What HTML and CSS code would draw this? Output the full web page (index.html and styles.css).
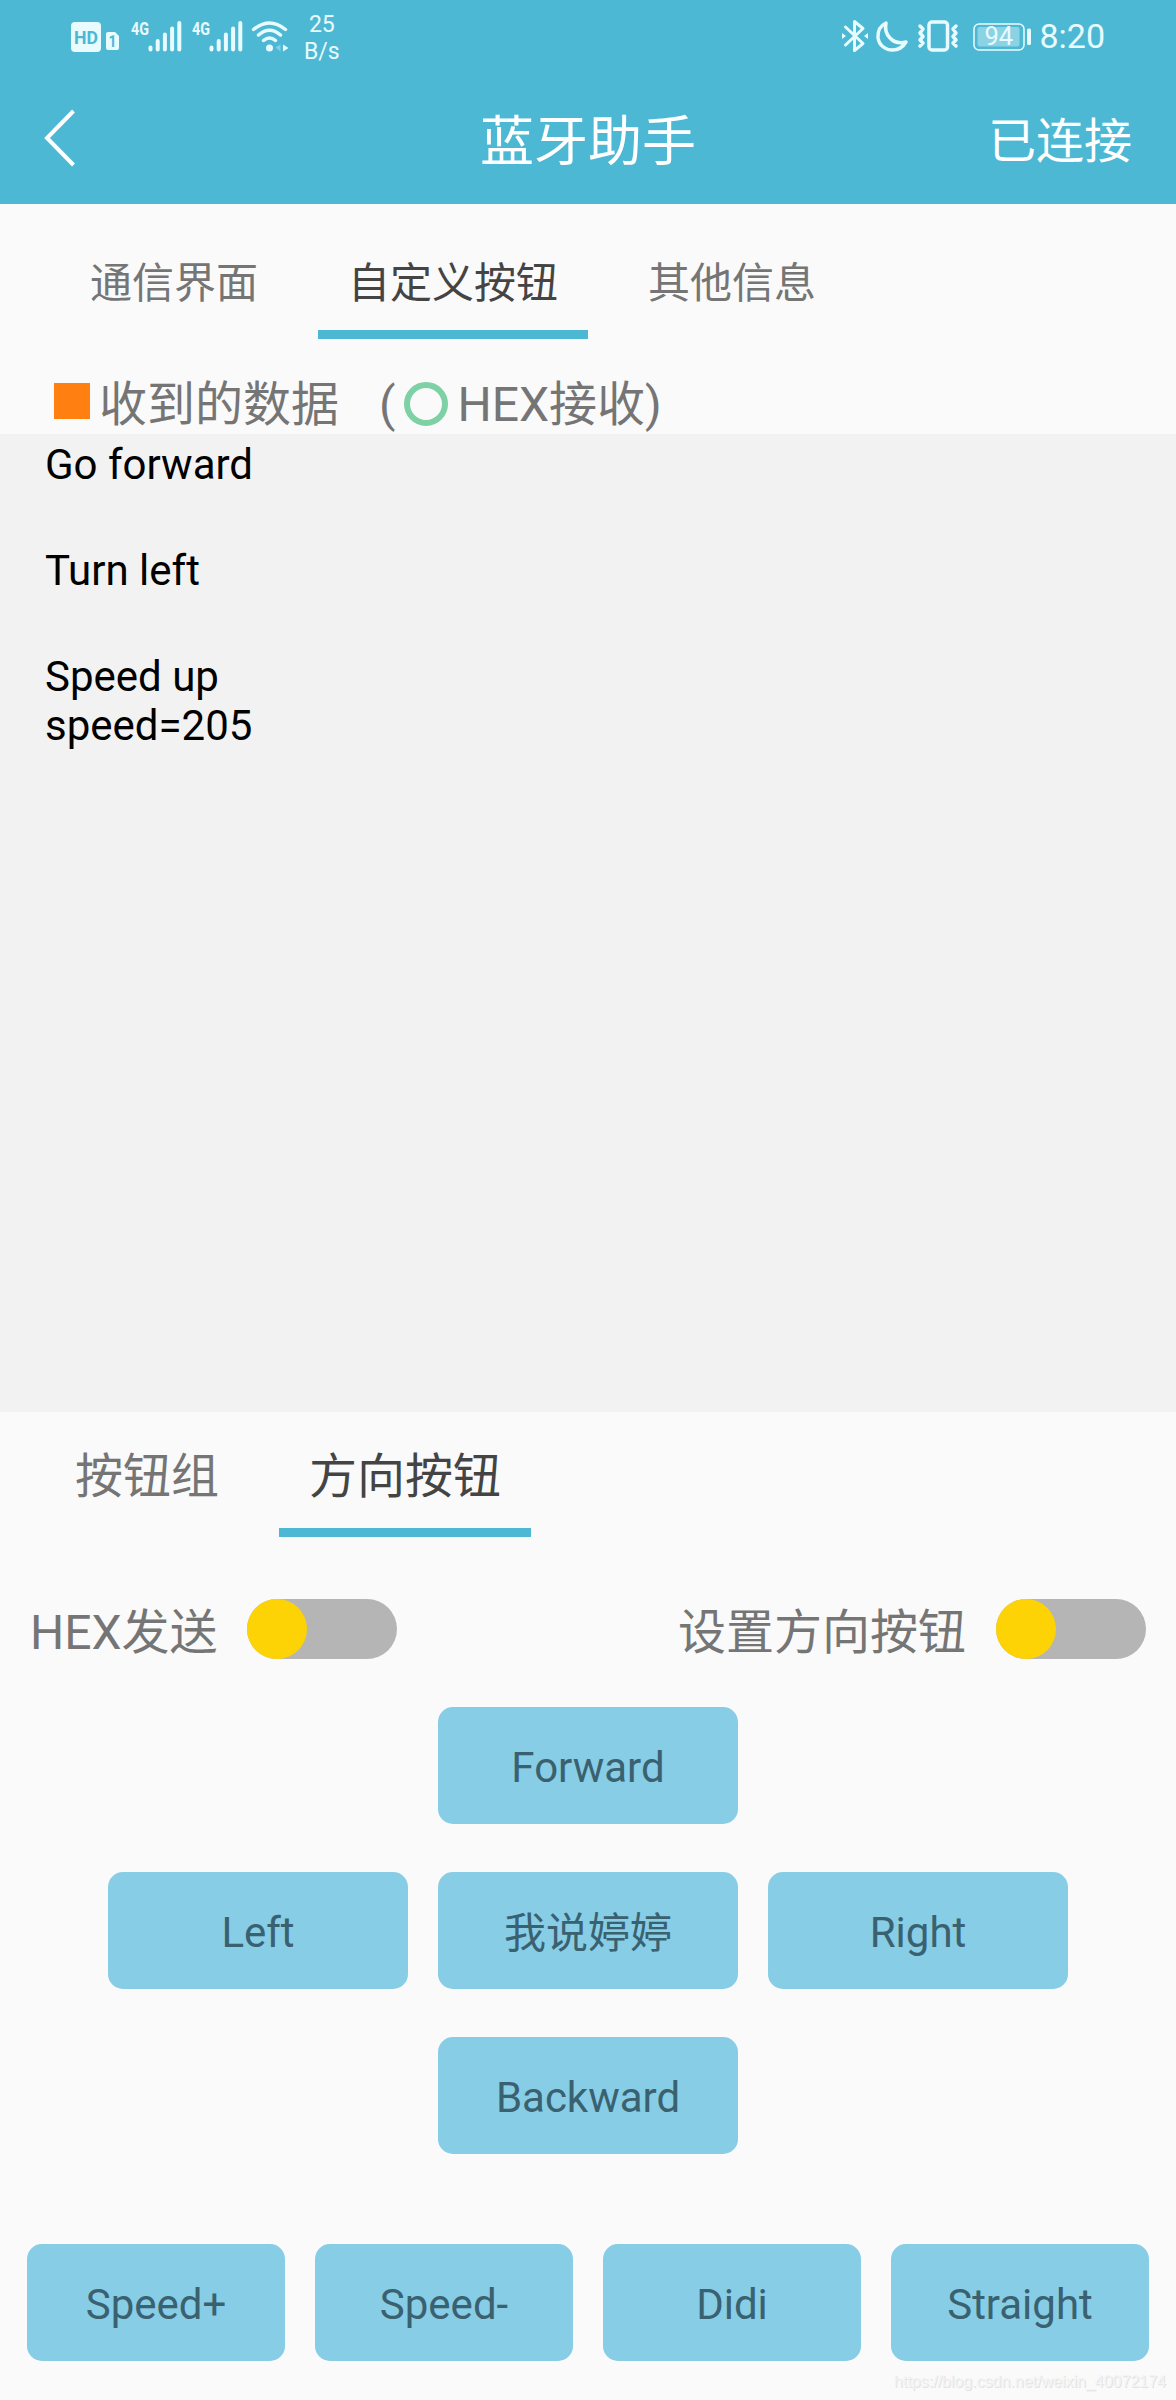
FILE: index.html
```html
<!DOCTYPE html>
<html lang="zh-CN">
<head>
<meta charset="UTF-8" />
<meta name="viewport" content="width=device-width, initial-scale=1" />
<title>蓝牙助手</title>
<link rel="stylesheet" href="styles.css">
</head>
<body>
  <header class="header">
    <div class="status-bar">
      <div class="status-left">
        <svg class="hd" width="48" height="32" viewBox="0 0 48 32">
          <rect x="0" y="2" width="30" height="30" rx="4"/>
          <text class="knock" x="3" y="24" font-size="19" textLength="24" lengthAdjust="spacingAndGlyphs">HD</text>
          <path d="M37 12h7l4 4v12a2 2 0 0 1-2 2h-9a2 2 0 0 1-2-2v-14a2 2 0 0 1 2-2z"/>
          <text class="knock" x="37.500" y="27" font-size="16" textLength="8" lengthAdjust="spacingAndGlyphs">1</text>
        </svg>
        <svg class="signal" width="51" height="32" viewBox="0 0 51 32">
          <text x="0" y="15" font-size="19" textLength="18" lengthAdjust="spacingAndGlyphs">4G</text>
          <path class="bars" d="M19.500 27.500v2M26.700 21v8.500M33.900 14.500v15M41.100 8.500v21M48.300 3v26.500"/>
        </svg>
        <svg class="signal" width="51" height="32" viewBox="0 0 51 32">
          <text x="0" y="15" font-size="19" textLength="18" lengthAdjust="spacingAndGlyphs">4G</text>
          <path class="bars" d="M19.500 27.500v2M26.700 21v8.500M33.900 14.500v15M41.100 8.500v21M48.300 3v26.500"/>
        </svg>
        <svg class="wifi" width="38" height="32" viewBox="0 0 38 32">
          <path class="line" d="M2.500 9.500Q18.500-3.500 34.500 9.500M7.500 15Q18.500 5.500 29.500 15M12.500 20.500Q18.500 15.500 24.500 20.500"/>
          <circle cx="18.500" cy="28" r="3.500"/>
          <path d="M32 24.500l5.500 3.500-5.500 3.500z"/>
          <path opacity=".35" d="M29.500 24.500v7l-5-4z"/>
        </svg>
        <div class="speed"><span>25</span><span>B/s</span></div>
      </div>
      <div class="status-right">
        <svg class="bluetooth" width="26" height="32" viewBox="0 0 26 32">
          <path class="line thin" d="M3.500 7l17.500 16.500-8.500 7v-29l8.500 7L3.500 25"/>
          <path d="M0 13l4 3-4 3zM26 13l-4 3 4 3z"/>
        </svg>
        <svg class="moon" width="32" height="32" viewBox="0 0 32 32">
          <path class="line" d="M10 3C4 6 1.500 11 2 17.500c1 8 7.500 12.500 14.500 12.500 6 0 10.500-3 13.500-8-6 1.500-12 .5-16-4C9.500 13.500 9 8 10 3z"/>
        </svg>
        <svg class="vibrate" width="40" height="32" viewBox="0 0 40 32">
          <rect class="line" x="11" y="2" width="18.500" height="28" rx="3"/>
          <path class="line" d="M2 6l3 3-3 4 3 3.500-3 3.500 3 3-3 3M38 6l-3 3 3 4-3 3.500 3 3.500-3 3 3 3"/>
        </svg>
        <svg class="battery" width="58" height="32" viewBox="0 0 58 32">
          <rect class="shell" x="1" y="4" width="50" height="26" rx="5"/>
          <rect x="4.500" y="7" width="42" height="19.500" rx="2" opacity=".4"/>
          <rect x="54" y="8.500" width="4" height="16.500" rx="1.500"/>
          <text class="level" x="11.500" y="25" font-size="25.500">94</text>
        </svg>
        <span class="clock">8:20</span>
      </div>
    </div>
    <div class="title-bar">
      <svg class="back" width="32" height="60" viewBox="0 0 32 60"><path d="M29.500 3L3 30l26.500 27"/></svg>
      <h1>蓝牙助手</h1>
      <span class="state">已连接</span>
    </div>
  </header>

  <nav class="tabs">
    <span class="tab">通信界面</span>
    <span class="tab active">自定义按钮</span>
    <span class="tab">其他信息</span>
  </nav>

  <div class="receive-title">
    <i class="square"></i>
    <span class="received">收到的数据</span>
    <span>(</span>
    <i class="ring"></i>
    <span>HEX接收)</span>
  </div>

  <div class="log">
    <p>Go forward</p>
    <p>Turn left</p>
    <p>Speed up<br>speed=205</p>
  </div>

  <nav class="tabs tabs-lower">
    <span class="tab">按钮组</span>
    <span class="tab active">方向按钮</span>
  </nav>

  <div class="switches">
    <label><span>HEX发送</span><i class="switch"></i></label>
    <label><span>设置方向按钮</span><i class="switch"></i></label>
  </div>

  <div class="direction">
    <button class="btn forward">Forward</button>
    <button class="btn left">Left</button>
    <button class="btn middle">我说婷婷</button>
    <button class="btn">Right</button>
    <button class="btn backward">Backward</button>
  </div>

  <div class="extra">
    <button class="btn">Speed+</button>
    <button class="btn">Speed-</button>
    <button class="btn">Didi</button>
    <button class="btn">Straight</button>
  </div>

  <div class="watermark">https://blog.csdn.net/weixin_40072174</div>
</body>
</html>
```
FILE: styles.css
```css
* {
  box-sizing: border-box;
}

body {
  margin: 0;
  width: 1176px;
  height: 2400px;
  position: relative;
  overflow: hidden;
  background: #fafafa;
  color: #757575;
  font-family: Roboto, "Noto Sans CJK SC", sans-serif;
  font-size: 48px;
}

.header {
  height: 204px;
  background: #4db8d4;
  color: #fff;
}

/* status bar */
.status-bar {
  display: flex;
  justify-content: space-between;
  height: 72px;
  padding: 0 71px;
  color: #e8fbff;
}

.status-left,
.status-right {
  display: flex;
  align-items: center;
}

.status-bar svg {
  display: block;
  fill: #e8fbff;
  overflow: visible;
}

.status-bar text {
  font-weight: 700;
}

.status-bar .knock {
  fill: #4db8d4;
}

.status-bar .bars,
.status-bar .line {
  fill: none;
  stroke: #e8fbff;
  stroke-width: 4;
  stroke-linecap: round;
  stroke-linejoin: round;
}

.status-bar .line {
  stroke-width: 3.5;
}

.status-bar .thin {
  stroke-width: 3;
}

.status-bar .shell {
  fill: none;
  stroke: #e8fbff;
  stroke-width: 1.5;
}

.status-bar .level {
  font-weight: 400;
}

.hd {
  margin-right: 2px;
}

.signal {
  margin-left: 10px;
}

.wifi {
  margin-left: 8px;
}

.speed {
  display: flex;
  flex-direction: column;
  align-items: center;
  margin: 3px 0 0 15px;
  font-size: 23px;
  line-height: 27px;
}

.moon {
  margin-left: 8px;
}

.vibrate {
  margin-left: 10px;
}

.battery {
  margin-left: 15px;
}

.clock {
  margin-left: 8px;
  font-size: 34px;
  line-height: 40px;
}

/* title bar */
.title-bar {
  display: grid;
  grid-template-columns: 200px 1fr 200px;
  align-items: center;
  height: 132px;
  padding: 0 44px;
}

.back {
  fill: none;
  stroke: #fff;
  stroke-width: 4;
}

.title-bar h1 {
  margin: 0;
  padding-top: 9px;
  font-size: 54px;
  font-weight: 400;
  line-height: 80px;
  text-align: center;
}

.state {
  padding-bottom: 3px;
  text-align: right;
}

/* tabs */
.tabs {
  display: flex;
  gap: 30px;
  height: 135px;
  padding: 21px 60px 0;
  font-size: 42px;
}

.tab {
  padding: 0 30px;
  line-height: 117px;
  height: 114px;
}

.tab.active {
  color: #444;
  border-bottom: 9px solid #4db8d4;
}

.tabs-lower {
  height: 125px;
  padding: 5px 45px 0;
  font-size: 48px;
}

.tabs-lower .tab {
  height: 120px;
  line-height: 120px;
}

.receive-title {
  display: flex;
  align-items: center;
  height: 95px;
  padding: 35px 0 0 54px;
  line-height: 59px;
}

.square {
  width: 36px;
  height: 36px;
  margin: -6px 9px 0 0;
  background: #ff7f11;
}

.received {
  margin-right: 40px;
}

.ring {
  width: 44px;
  height: 44px;
  margin: 0 9px;
  border: 6px solid #7dd1a5;
  border-radius: 50%;
}

.log {
  height: 978px;
  padding: 6px 45px;
  background: #f2f2f2;
  color: #000;
  font-size: 42px;
  line-height: 49px;
}

.log p {
  margin: 0 0 57px;
}

/* switches */
.switches {
  display: flex;
  justify-content: space-between;
  padding: 62px 30px 48px;
}

.switches label {
  display: flex;
  align-items: center;
  gap: 30px;
  height: 60px;
}

.switches span {
  padding-bottom: 2px;
}

.switches label:first-child {
  gap: 29px;
}

.switch {
  width: 150px;
  height: 60px;
  border-radius: 30px;
  background: #b5b5b5;
}

.switch::before {
  content: "";
  display: block;
  width: 60px;
  height: 60px;
  border-radius: 50%;
  background: #fdd305;
}

/* buttons */
.direction {
  display: grid;
  grid-template-columns: repeat(3, 300px);
  gap: 48px 30px;
  justify-content: center;
}

.forward,
.backward {
  grid-column: 2;
}

.left {
  grid-column: 1;
}

.btn {
  height: 117px;
  padding: 3px 0 0;
  border: 0;
  border-radius: 15px;
  background: #87cde5;
  color: #3a6170;
  font-family: inherit;
  font-size: 42px;
}

.middle {
  padding: 0 0 2px;
}

.extra {
  display: grid;
  grid-template-columns: repeat(4, 1fr);
  gap: 30px;
  padding: 90px 27px 0;
}

.watermark {
  position: absolute;
  right: 10px;
  bottom: 8px;
  color: #f4f4f4;
  font-family: "Liberation Sans", sans-serif;
  font-size: 16px;
  line-height: 20px;
  text-shadow: 1px 1px 0 #e2e2e2;
}
```
